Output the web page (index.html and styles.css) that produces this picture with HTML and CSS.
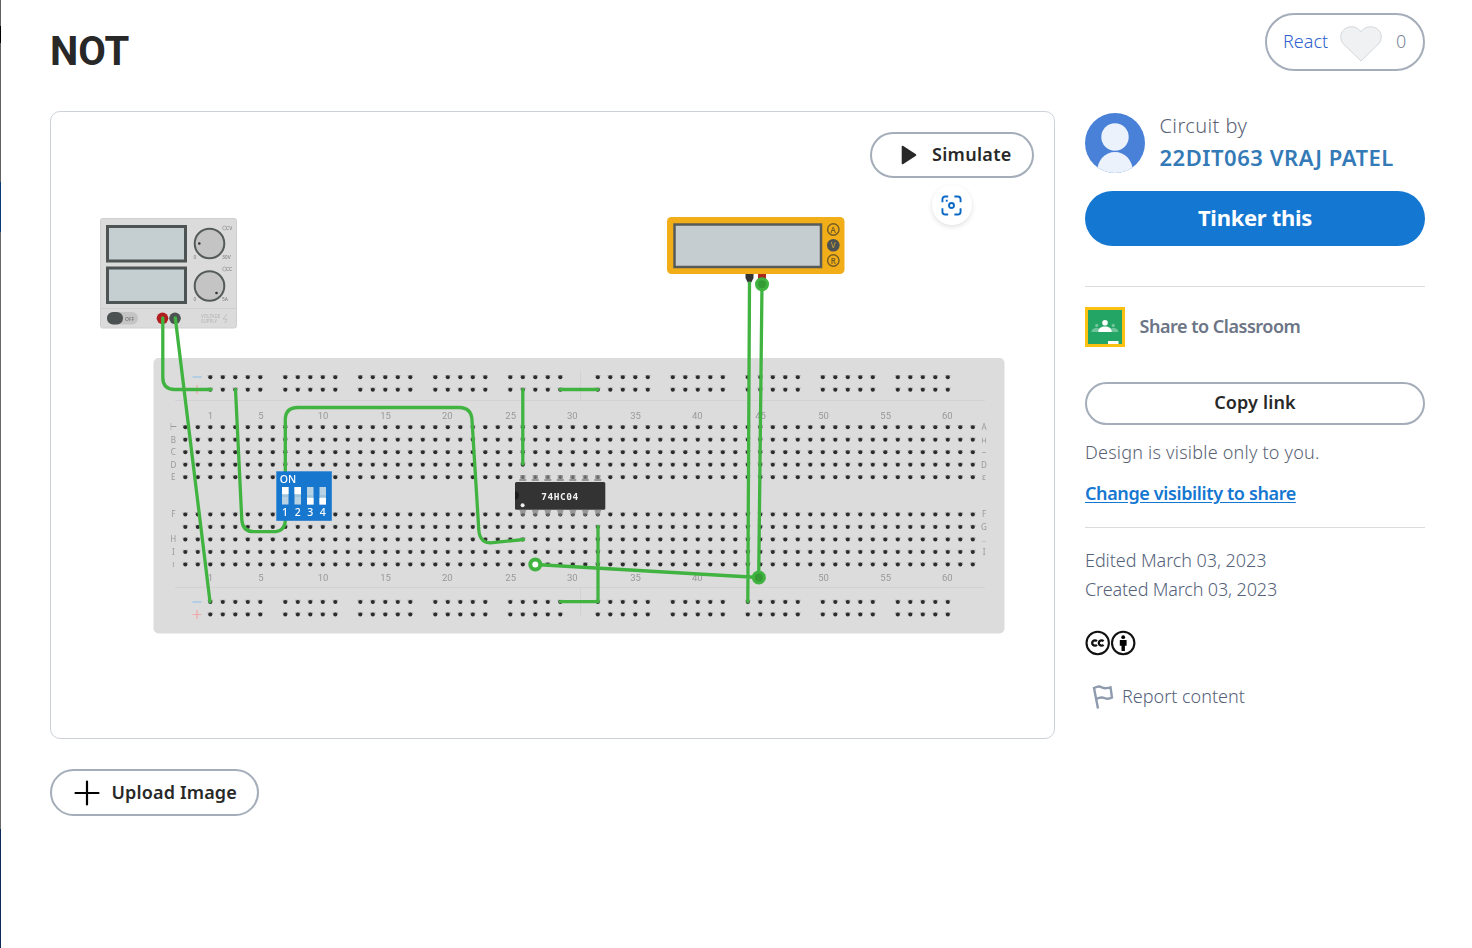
FILE: index.html
```
<!DOCTYPE html>
<html lang="en">
<head>
<meta charset="utf-8">
<title>NOT</title>
<link rel="stylesheet" href="styles.css">
</head>
<body>
<div class="page">
  <header class="header">
    <h1 class="title">NOT</h1>
    <button class="react">
      <span class="react-label">React</span>
      <svg class="heart" width="42" height="36" viewBox="0 0 42 36"><path d="M21 35 3.200 17.700C-.2 13.600 0 7.500 3.500 4 7.500 0 14.500-.2 18.200 3L21 5.600 23.800 3C27.500-.2 34.500 0 38.500 4c3.500 3.500 3.700 9.600.3 13.700z" fill="#f0f1f3" stroke="#d3d6da"/></svg>
      <span class="react-count">0</span>
    </button>
  </header>

  <main class="main">
    <section class="left">
      <div class="card">
        <svg class="circuit" width="1003" height="626" viewBox="51 112 1003 626">
          <!-- breadboard -->
          <rect x="153.500" y="358" width="851" height="275.500" rx="5" fill="#dcdcdc"/>
          <g stroke="#d2d2d2">
            <path d="M175 400.500H985M175 587.500H985M580.500 371v29M580.500 588v28"/>
          </g>
          <g id="holes"></g>
          <g id="numbers" class="numbers"></g>
          <g id="letters" class="letters"></g>
          <path d="M192.500 377h9M192.500 602h9" stroke="#a5c8e8" stroke-width="1.300"/>
          <path d="M192.500 389.500h9M197 385v9M192.500 614.500h9M197 610v9" stroke="#f0a8a8" stroke-width="1.200"/>

          <!-- power supply -->
          <rect x="100.500" y="218.500" width="136" height="109.500" rx="2" fill="#dbdbdb" stroke="#d0d0d0"/>
          <path d="M101 308.500h135" stroke="#cfcfcf"/>
          <g fill="#c5ced1" stroke="#4d5453" stroke-width="3">
            <rect x="107.500" y="226.500" width="78" height="34.500"/>
            <rect x="107.500" y="268" width="78" height="34.500"/>
          </g>
          <g fill="#c4c4c4" stroke="#555b5b" stroke-width="2">
            <circle cx="209.500" cy="243.500" r="14.800"/>
            <circle cx="209.500" cy="286" r="14.800"/>
          </g>
          <circle cx="199.300" cy="243.500" r="1.300" fill="#333"/>
          <circle cx="216.500" cy="293" r="1.300" fill="#333"/>
          <g class="tiny">
            <text x="193.500" y="259">0</text><text x="222" y="259">30V</text>
            <text x="193.500" y="301">0</text><text x="222" y="301">5A</text>
            <text x="226" y="230">CV</text><text x="226" y="271">CC</text>
          </g>
          <g fill="none" stroke="#a3a3a3" stroke-width=".8">
            <circle cx="224.500" cy="228" r="2"/><circle cx="224.500" cy="269" r="2"/>
          </g>
          <g class="faint"><text x="201" y="317.500">VOLTAGE</text><text x="201" y="322.500">SUPPLY</text></g>
          <path d="M227 314l-4 5h4l-2 4" fill="none" stroke="#c0c0c0"/>
          <rect x="107" y="312" width="31" height="12.500" rx="6.200" fill="#c4c4c4"/>
          <rect x="107" y="312" width="16" height="12.500" rx="6.200" fill="#4c5251"/>
          <text x="125" y="320.500" class="off">OFF</text>
          <circle cx="162.500" cy="318.300" r="5.800" fill="#b01e1e"/>
          <circle cx="175" cy="318.300" r="5.800" fill="#4c5251"/>

          <!-- multimeter -->
          <rect x="667" y="217" width="177.500" height="57" rx="4.500" fill="#f1ae19"/>
          <rect x="674.500" y="224.500" width="146.500" height="42.500" fill="#c5cdd0" stroke="#565b59" stroke-width="2.500"/>
          <g fill="none" stroke="#755d24" stroke-width="1.400">
            <circle cx="833.300" cy="229.500" r="5.700"/>
            <circle cx="833.300" cy="260.500" r="5.700"/>
          </g>
          <circle cx="833.300" cy="245.300" r="6.300" fill="#4c5251"/>
          <g class="meter"><text x="833.300" y="232.500">A</text><text x="833.300" y="248.300" class="on">V</text><text x="833.300" y="263.500">R</text></g>
          <path d="M745.500 274h8v4l-2.500 5h-3l-2.500-5z" fill="#333"/>
          <path d="M758 274h8v6h-8z" fill="#a92820"/>

          <!-- chip -->
          <g id="pins"></g>
          <rect x="515" y="482" width="90.300" height="27.800" rx="1.500" fill="#333"/>
          <path d="M515 491.500a4 4 0 0 1 0 8z" fill="#1c1c1c"/>
          <circle cx="522.600" cy="505.300" r="2" fill="#eee"/>
          <text x="560" y="499.500" class="chip">74HC04</text>

          <!-- wires -->
          <g class="wire">
            <path d="M162.800 318v59.500q0 12 12 12H211"/>
            <path d="M175.300 318 210 601.700"/>
            <path d="M235.500 389.500 241.800 520q1 11.700 12 11.700h19q12.500 0 12.500-12V420q0-12.500 12.500-12.500H459q12.300 0 13 12.500L478.800 530q1 14 14 12.700L523.500 539.500"/>
            <path d="M522.800 389.500v74.500M560.500 389.500h37.300M598 526.500v75.200H560.500"/>
            <path d="M749.500 283 747.800 601.700M762 284 758.700 577.500M535.500 564.500 758.700 577.500"/>
          </g>
          <circle cx="535.300" cy="564.500" r="5" fill="#fff" stroke="#40b340" stroke-width="4"/>
          <g fill="#359c35" stroke="#40b340" stroke-width="3">
            <circle cx="762" cy="284.300" r="5.500"/><circle cx="758.800" cy="577.500" r="5.500"/>
          </g>

          <!-- DIP switch -->
          <rect x="276.300" y="471.300" width="55.500" height="49.500" fill="#1777cf"/>
          <g fill="#b9d2e3">
            <path d="M282 487h6.500v17.500H282zM294.500 487h6.500v17.500h-6.500zM307 487h6.500v17.500H307zM319.500 487h6.500v17.500h-6.500z"/>
          </g>
          <path d="M282 487h6.500v7H282zM294.500 487h6.500v7h-6.500zM307 498h6.500v6.500H307zM319.500 498h6.500v6.500h-6.500z" fill="#fff"/>
          <path d="M282 496h6.500M294.500 496h6.500M307 496h6.500M319.500 496h6.500" stroke="#7fb0d8" stroke-width=".8"/>
          <g class="dip">
            <text x="288" y="483.300">ON</text>
            <text x="285" y="515.700">1</text><text x="297.800" y="515.700">2</text><text x="310.300" y="515.700">3</text><text x="322.700" y="515.700">4</text>
          </g>
        </svg>
        <button class="pill simulate">
          <svg width="16" height="20" viewBox="0 0 16 20"><path d="M1.500 1.500v17L14.500 10z" fill="#282828" stroke="#282828" stroke-width="1.600" stroke-linejoin="round"/></svg>
          <span>Simulate</span>
        </button>
        <button class="fit">
          <svg width="21" height="21" viewBox="0 0 22 22" fill="none" stroke="#0b69c5" stroke-width="2">
            <path d="M1.500 7.500V4.500a3 3 0 0 1 3-3h3M14 1.500h3.500a3 3 0 0 1 3 3v3M20.500 14v3.500a3 3 0 0 1-3 3H14M7.500 20.500h-3a3 3 0 0 1-3-3V14"/>
            <circle cx="11" cy="11" r="2.600"/><path d="M5 6h2" />
          </svg>
        </button>
      </div>
      <button class="pill upload">
        <svg width="26" height="26" viewBox="0 0 26 26" stroke="#000" stroke-width="2.200" stroke-linecap="round"><path d="M13 1.500v23M1.500 13h23"/></svg>
        <span>Upload Image</span>
      </button>
    </section>

    <aside class="side">
      <div class="author">
        <svg width="60" height="60" viewBox="0 0 60 60">
          <defs><clipPath id="disc"><circle cx="30" cy="30" r="30"/></clipPath></defs>
          <g clip-path="url(#disc)"><rect width="60" height="60" fill="#4a81d8"/><circle cx="30" cy="24" r="13.700" fill="#ebf2fb"/><ellipse cx="30" cy="58" rx="17.800" ry="19" fill="#ebf2fb"/></g>
        </svg>
        <div class="author-text">
          <span class="by">Circuit by</span>
          <a class="name">22DIT063 VRAJ PATEL</a>
        </div>
      </div>
      <button class="tinker">Tinker this</button>
      <div class="classroom">
        <svg width="40" height="40" viewBox="0 0 40 40">
          <rect width="40" height="40" fill="#fcc010"/><rect x="3" y="3" width="34" height="34" fill="#23a566"/>
          <g fill="#6fc499"><circle cx="11.700" cy="18.500" r="1.700"/><circle cx="28.300" cy="18.500" r="1.700"/><path d="M6.500 25c0-3 2.500-4 5.200-4s4 1 4 4zM24.300 25c0-3 1.300-4 4-4s5 1 5 4z"/></g>
          <g fill="#fff"><circle cx="20" cy="15.800" r="2.800"/><path d="M13.300 25c0-4.200 3-5.500 6.700-5.500s6.700 1.300 6.700 5.500zM23 34h10.500v3H23z"/></g>
        </svg>
        <span class="classroom-label">Share to Classroom</span>
      </div>
      <button class="pill copy"><span>Copy link</span></button>
      <p class="visible">Design is visible only to you.</p>
      <a class="change">Change visibility to share</a>
      <div class="dates">
        <span class="edited">Edited March 03, 2023</span>
        <span class="created">Created March 03, 2023</span>
      </div>
      <div class="license">
        <svg width="51" height="26" viewBox="0 0 51 26">
          <g fill="#fff" stroke="#111" stroke-width="2.100"><circle cx="12.700" cy="13" r="11.200"/><circle cx="38.200" cy="13" r="11.200"/></g>
          <g fill="none" stroke="#111" stroke-width="2.300"><path d="M11.900 11.200a2.700 2.700 0 1 0 0 3.600M18.500 11.200a2.700 2.700 0 1 0 0 3.600"/></g>
          <circle cx="38.200" cy="7.200" r="1.900"/><path d="M34.800 10h6.800v5.700h-1.700V21h-3.400v-5.300h-1.700z"/>
        </svg>
      </div>
      <div class="report">
        <svg width="22" height="24" viewBox="0 0 22 24" fill="none" stroke="#8e9aad" stroke-width="2.400"><path d="M6 23.500 2 3C6.500 1 7.500 1.200 10.500 2.700 13.500 4 14.500 3.200 18.500 2.300L20 12.500C16.500 14.500 15 14.300 12.500 13 9.500 11.800 8 12 4.200 14"/></svg>
        <span>Report content</span>
      </div>
    </aside>
  </main>
</div>
<script src="script.js"></script>
</body>
</html>
```
FILE: script.js
```
const NS = "http://www.w3.org/2000/svg";
const add = (parent, tag, attrs, text) => {
  const el = document.createElementNS(NS, tag);
  for (const key in attrs) el.setAttribute(key, attrs[key]);
  if (text) el.textContent = text;
  document.getElementById(parent).append(el);
};

const hole = (x, y) => {
  add("holes", "path", { d: `M${x - 3} ${y - 2}h6l-1 3h-4z`, fill: "#b0b0b0" });
  add("holes", "circle", { cx: x, cy: y + 0.2, r: 2, fill: "#2c2c2c" });
};

// Terminal strips: 64 columns, ten rows.
const rows = [427, 439.5, 452, 464.5, 477, 514.3, 526.8, 539.3, 551.8, 564.3];
for (const y of rows)
  for (let i = 0; i < 64; i++) hole(185.3 + i * 12.5, y);

// Power rails: groups of five holes.
for (const y of [377, 389.5, 601.8, 614.3])
  for (const start of [210.3, 285.3, 360.3, 435.3, 510.3, 597.8, 672.8, 747.8, 822.8, 897.8])
    for (let i = 0; i < 5; i++) hole(start + i * 12.5, y);

const xs = [210.5, 261, 323, 385.5, 447.3, 510.7, 572.3, 635.5, 697.3, 760.5, 823.5, 885.7, 947.3];
xs.forEach((x, i) => {
  for (const y of [419, 581.3]) add("numbers", "text", { x, y }, String(i ? i * 5 : 1));
});

const left = ["⊢", "B", "C", "D", "E", "F", "", "H", "I", "ı"];
const right = ["A", "ʜ", "–", "D", "ε", "F", "G", "..", "I", ""];
rows.forEach((y, i) => {
  if (left[i]) add("letters", "text", { x: 173.3, y: y + 3 }, left[i]);
  if (right[i]) add("letters", "text", { x: 984, y: y + 3 }, right[i]);
});

for (let i = 0; i < 7; i++) {
  const x = 522.8 + i * 12.5;
  add("pins", "path", { d: `M${x - 2.5} 475.500h5v3.500h1v2h-7v-2h1z`, fill: "#999" });
  add("pins", "circle", { cx: x, cy: 477.5, r: 1.4, fill: "#666" });
  add("pins", "path", { d: `M${x - 3.5} 510h7l-2 4.500h-3z`, fill: "#999" });
  add("pins", "circle", { cx: x, cy: 514.5, r: 1.5, fill: "#666" });
}
```
FILE: styles.css
```
* { box-sizing: border-box; }
body {
  margin: 0;
  background: #fff;
  color: #282828;
  font-family: "Noto Sans", "Open Sans", sans-serif;
}
button { font: inherit; margin: 0; padding: 0; background: #fff; color: inherit; }
svg { display: block; flex: none; }
p { margin: 0; }

.page {
  height: 948px;
  padding: 13px 47px 0 49px;
  border-left: 1px solid;
  border-image: linear-gradient(#606060 0 27px, #000 27px 44px, #606060 44px 183px, #0b3a78 183px 233px, #686868 233px 828px, #0c2b5c 828px) 1;
  overflow: hidden;
}
.header { display: flex; justify-content: space-between; height: 58px; }
.title {
  margin: 0;
  padding: 10px 0 0;
  font: 700 40px/58px Roboto, sans-serif;
}
.react {
  display: flex;
  align-items: center;
  width: 160px;
  height: 58px;
  padding-left: 16px;
  border: 2px solid #a4adb9;
  border-radius: 29px;
  font-size: 18px;
  font-weight: 300;
}
.react-label { width: 57px; padding-bottom: 2px; text-align: left; color: #2f62cc; }
.heart { margin-top: 4px; }
.react-count { margin-left: 14px; padding-bottom: 2px; color: #7c8799; }

.main { display: grid; grid-template-columns: 1005px 340px; gap: 30px; margin-top: 40px; }
.card {
  position: relative;
  height: 628px;
  border: 1px solid #cdd2d8;
  border-radius: 10px;
}
.circuit { filter: blur(.5px); }
.pill {
  display: flex;
  align-items: center;
  border: 2px solid #a4adb9;
  border-radius: 30px;
  font-size: 18px;
  font-weight: 600;
}
.pill span { padding-bottom: 2px; }
.simulate {
  position: absolute;
  top: 20px;
  right: 20px;
  width: 164px;
  height: 46px;
  padding-left: 29px;
  gap: 15px;
  letter-spacing: .3px;
}
.fit {
  position: absolute;
  top: 73px;
  right: 82px;
  display: grid;
  place-items: center;
  width: 40px;
  height: 40px;
  border: 0;
  border-radius: 50%;
  box-shadow: 0 2px 5px rgba(0, 0, 0, .12);
}
.fit svg { margin-right: 1px; }
.upload {
  width: 209px;
  height: 47px;
  margin-top: 30px;
  padding-left: 22px;
  gap: 11.500px;
  letter-spacing: .15px;
}

.author { display: flex; gap: 14.500px; padding-top: 2px; height: 62px; }
.author-text { display: flex; flex-direction: column; font-size: 20px; }
.by { line-height: 26px; font-weight: 300; color: #596274; letter-spacing: .4px; }
.name {
  font-size: 22px;
  line-height: 37px;
  font-weight: 600;
  color: #337ab7;
  letter-spacing: .53px;
  white-space: nowrap;
}
.tinker {
  display: block;
  width: 340px;
  height: 55px;
  margin-top: 18px;
  padding-bottom: 3px;
  border: 0;
  border-radius: 28px;
  background: #1477d1;
  color: #fff;
  font-size: 22px;
  font-weight: 700;
  letter-spacing: -.3px;
}
.classroom {
  display: flex;
  align-items: center;
  gap: 14.500px;
  height: 61px;
  margin-top: 40px;
  padding-top: 20px;
  border-top: 1px solid #dadbdd;
  font-size: 18px;
  font-weight: 600;
  color: #6c7586;
  letter-spacing: -.48px;
}
.classroom-label { padding-bottom: 2px; }
.copy {
  justify-content: center;
  width: 340px;
  height: 43px;
  margin-top: 35px;
  letter-spacing: .15px;
}
.copy span { padding-bottom: 3px; }
.visible {
  margin-top: 14px;
  font-size: 18px;
  line-height: 26px;
  font-weight: 300;
  color: #596274;
  letter-spacing: .22px;
}
.change {
  display: block;
  margin-top: 15px;
  font-size: 18px;
  line-height: 26px;
  font-weight: 600;
  color: #1477d1;
  letter-spacing: -.38px;
  text-decoration: underline;
  text-underline-offset: 2px;
}
.dates {
  display: flex;
  flex-direction: column;
  margin-top: 21px;
  padding-top: 18px;
  border-top: 1px solid #dadbdd;
  font-size: 18px;
  line-height: 29px;
  font-weight: 300;
  color: #55627a;
}
.edited { letter-spacing: -.07px; }
.created { letter-spacing: -.16px; }
.license { margin-top: 26px; }
.report {
  display: flex;
  align-items: center;
  gap: 8px;
  margin-top: 28px;
  padding-left: 7px;
  font-size: 18px;
  line-height: 24px;
  font-weight: 300;
  color: #55627a;
}
.report span { padding-bottom: 2px; }

.wire path { fill: none; stroke: #40b340; stroke-width: 3.300; stroke-linecap: round; stroke-linejoin: round; }
.numbers { font: 9.500px Roboto, sans-serif; fill: #999; text-anchor: middle; }
.letters { font-size: 8px; fill: #999; text-anchor: middle; }
.tiny { font-size: 5px; fill: #777; }
.off { font-size: 5px; font-weight: 600; fill: #777; }
.faint { font-size: 4.500px; fill: #b4b4b4; }
.meter { font-size: 8px; font-weight: 600; text-anchor: middle; fill: #755d24; }
.meter .on { fill: #b9953f; }
.chip { font: 700 9.500px "DejaVu Sans Mono", monospace; letter-spacing: .5px; fill: #f2f2f2; text-anchor: middle; }
.dip { font-size: 10.500px; font-weight: 500; fill: #fff; text-anchor: middle; }
```
